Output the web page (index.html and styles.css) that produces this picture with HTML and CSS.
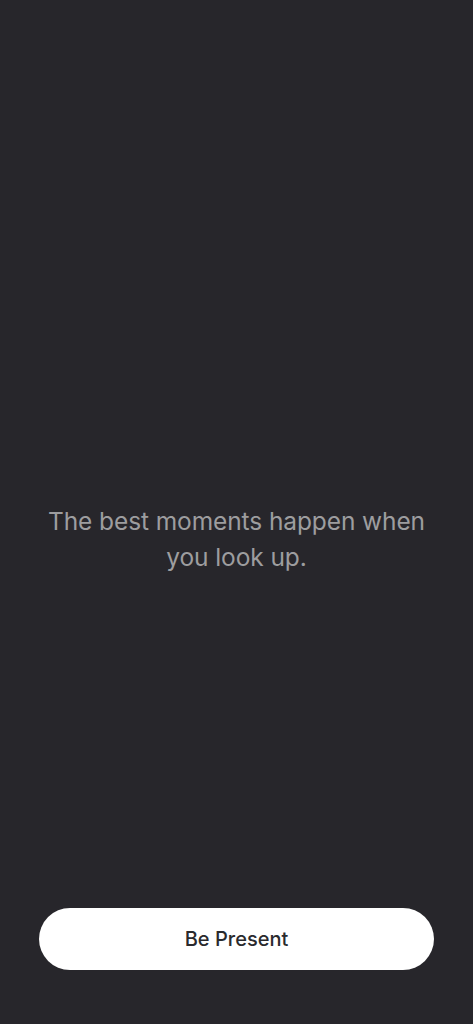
FILE: index.html
```html
<!DOCTYPE html>
<html lang="en">
<head>
<meta charset="utf-8">
<link rel="stylesheet" href="styles.css">
</head>
<body>
<main class="screen">
  <div class="content">
    <p class="quote">The best moments happen when you look up.</p>
  </div>
  <div class="footer">
    <button class="cta">Be Present</button>
  </div>
</main>
</body>
</html>
```
FILE: styles.css
```css
html, body {
  margin: 0;
  padding: 0;
  background: #27262b;
}
.screen {
  height: 1024px;
  display: flex;
  flex-direction: column;
  font-family: Inter, "Noto Sans", sans-serif;
}
.content {
  flex: 1;
  display: flex;
  align-items: center;
  justify-content: center;
  padding: 170px 40px 0;
}
.quote {
  margin: 0;
  color: #9d9d9f;
  font-size: 24.5px;
  line-height: 36px;
  text-align: center;
  letter-spacing: -0.1px;
}
.footer {
  padding: 0 39px 54px;
}
.cta {
  display: block;
  width: 100%;
  height: 62px;
  border: none;
  border-radius: 31px;
  background: #ffffff;
  color: #2a2a2d;
  font-family: Inter, "Noto Sans", sans-serif;
  font-size: 20px;
  font-weight: 500;
  letter-spacing: 0;
}
```
